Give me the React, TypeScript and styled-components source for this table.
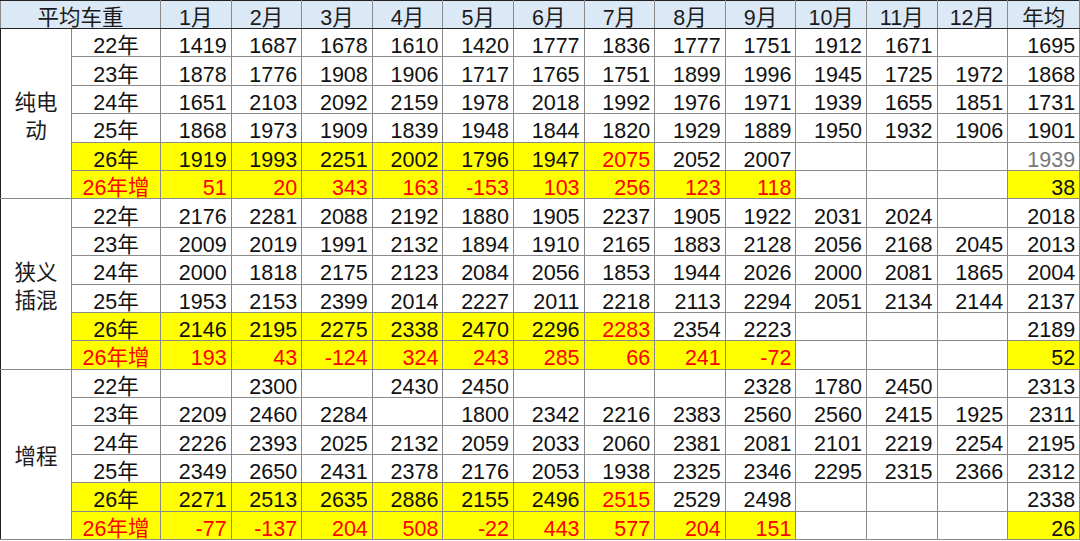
import React from "react";
import styled, { createGlobalStyle } from "styled-components";

const GlobalStyle = createGlobalStyle`
  html, body {
    margin: 0;
    padding: 0;
    background: #ffffff;
  }
  body {
    font-family: "Liberation Sans", "Noto Sans CJK SC", sans-serif;
  }
`;

type Tone = "plain" | "hi" | "hiRed" | "gray";

interface RowData {
  year: string;
  values: string[];
  avg: string;
  kind: "normal" | "current" | "growth";
}

interface Group {
  label: string[];
  rows: RowData[];
}

const MONTHS = ["1月", "2月", "3月", "4月", "5月", "6月", "7月", "8月", "9月", "10月", "11月", "12月"];

const groups: Group[] = [
  {
    label: ["纯电", "动"],
    rows: [
      { year: "22年", kind: "normal", avg: "1695", values: ["1419", "1687", "1678", "1610", "1420", "1777", "1836", "1777", "1751", "1912", "1671", ""] },
      { year: "23年", kind: "normal", avg: "1868", values: ["1878", "1776", "1908", "1906", "1717", "1765", "1751", "1899", "1996", "1945", "1725", "1972"] },
      { year: "24年", kind: "normal", avg: "1731", values: ["1651", "2103", "2092", "2159", "1978", "2018", "1992", "1976", "1971", "1939", "1655", "1851"] },
      { year: "25年", kind: "normal", avg: "1901", values: ["1868", "1973", "1909", "1839", "1948", "1844", "1820", "1929", "1889", "1950", "1932", "1906"] },
      { year: "26年", kind: "current", avg: "1939", values: ["1919", "1993", "2251", "2002", "1796", "1947", "2075", "2052", "2007", "", "", ""] },
      { year: "26年增", kind: "growth", avg: "38", values: ["51", "20", "343", "163", "-153", "103", "256", "123", "118", "", "", ""] },
    ],
  },
  {
    label: ["狭义", "插混"],
    rows: [
      { year: "22年", kind: "normal", avg: "2018", values: ["2176", "2281", "2088", "2192", "1880", "1905", "2237", "1905", "1922", "2031", "2024", ""] },
      { year: "23年", kind: "normal", avg: "2013", values: ["2009", "2019", "1991", "2132", "1894", "1910", "2165", "1883", "2128", "2056", "2168", "2045"] },
      { year: "24年", kind: "normal", avg: "2004", values: ["2000", "1818", "2175", "2123", "2084", "2056", "1853", "1944", "2026", "2000", "2081", "1865"] },
      { year: "25年", kind: "normal", avg: "2137", values: ["1953", "2153", "2399", "2014", "2227", "2011", "2218", "2113", "2294", "2051", "2134", "2144"] },
      { year: "26年", kind: "current", avg: "2189", values: ["2146", "2195", "2275", "2338", "2470", "2296", "2283", "2354", "2223", "", "", ""] },
      { year: "26年增", kind: "growth", avg: "52", values: ["193", "43", "-124", "324", "243", "285", "66", "241", "-72", "", "", ""] },
    ],
  },
  {
    label: ["增程"],
    rows: [
      { year: "22年", kind: "normal", avg: "2313", values: ["", "2300", "", "2430", "2450", "", "", "", "2328", "1780", "2450", ""] },
      { year: "23年", kind: "normal", avg: "2311", values: ["2209", "2460", "2284", "", "1800", "2342", "2216", "2383", "2560", "2560", "2415", "1925"] },
      { year: "24年", kind: "normal", avg: "2195", values: ["2226", "2393", "2025", "2132", "2059", "2033", "2060", "2381", "2081", "2101", "2219", "2254"] },
      { year: "25年", kind: "normal", avg: "2312", values: ["2349", "2650", "2431", "2378", "2176", "2053", "1938", "2325", "2346", "2295", "2315", "2366"] },
      { year: "26年", kind: "current", avg: "2338", values: ["2271", "2513", "2635", "2886", "2155", "2496", "2515", "2529", "2498", "", "", ""] },
      { year: "26年增", kind: "growth", avg: "26", values: ["-77", "-137", "204", "508", "-22", "443", "577", "204", "151", "", "", ""] },
    ],
  },
];

const Page = styled.div`
  width: 1080px;
  height: 541px;
  overflow: hidden;
`;

const Table = styled.table`
  width: 1080px;
  border-collapse: collapse;
  table-layout: fixed;
  border: 1px solid #222;
  font-size: 21.5px;
  line-height: 18px;
  color: #111;
`;

const HeadCell = styled.th`
  height: 21px;
  padding: 6px 0 0 0;
  background: #dbe8f5;
  border: 1px solid #8a8a8a;
  border-top-color: #222;
  border-bottom-color: #222;
  font-weight: normal;
  text-align: center;
  color: #1b1b1b;
  vertical-align: middle;
`;

const CategoryCell = styled.td`
  padding: 6px 0 0 0;
  border: 1px solid #8a8a8a;
  border-top-color: #222;
  border-left-color: #222;
  background: #fff;
  text-align: center;
  vertical-align: middle;
  line-height: 28px;
  color: #1b1b1b;
`;

const Cell = styled.td<{ $tone: Tone; $center?: boolean; $groupStart?: boolean }>`
  height: 20.4px;
  padding: 7px ${(p) => (p.$center ? "0" : "4px")} 0 0;
  border: 1px solid #8a8a8a;
  border-top-color: ${(p) => (p.$groupStart ? "#222" : "#8a8a8a")};
  text-align: ${(p) => (p.$center ? "center" : "right")};
  vertical-align: middle;
  white-space: nowrap;
  background: ${(p) => (p.$tone === "hi" || p.$tone === "hiRed" ? "#ffff00" : "#ffffff")};
  color: ${(p) => (p.$tone === "hiRed" ? "#ff0000" : p.$tone === "gray" ? "#777777" : "#111")};
`;

const monthTone = (row: RowData, idx: number): Tone => {
  if (row.kind === "current") {
    if (idx < 6) return "hi";
    if (idx === 6) return "hiRed";
    return "plain";
  }
  if (row.kind === "growth") {
    return idx < 9 ? "hiRed" : "plain";
  }
  return "plain";
};

const avgTone = (row: RowData, groupIdx: number): Tone => {
  if (row.kind === "growth") return "hi";
  if (row.kind === "current" && groupIdx === 0) return "gray";
  return "plain";
};

const yearTone = (row: RowData): Tone => {
  if (row.kind === "current") return "hi";
  if (row.kind === "growth") return "hiRed";
  return "plain";
};

export default function App() {
  return (
    <Page>
      <GlobalStyle />
      <Table>
        <colgroup>
          <col style={{ width: 71 }} />
          <col style={{ width: 89 }} />
          {MONTHS.map((m) => (
            <col key={m} style={{ width: 70.6 }} />
          ))}
          <col style={{ width: 72 }} />
        </colgroup>
        <thead>
          <tr>
            <HeadCell colSpan={2}>平均车重</HeadCell>
            {MONTHS.map((m) => (
              <HeadCell key={m}>{m}</HeadCell>
            ))}
            <HeadCell>年均</HeadCell>
          </tr>
        </thead>
        <tbody>
          {groups.map((g, gi) =>
            g.rows.map((row, ri) => (
              <tr key={`${gi}-${ri}`}>
                {ri === 0 && (
                  <CategoryCell rowSpan={g.rows.length}>
                    {g.label.map((l) => (
                      <div key={l}>{l}</div>
                    ))}
                  </CategoryCell>
                )}
                <Cell $tone={yearTone(row)} $center $groupStart={ri === 0}>
                  {row.year}
                </Cell>
                {row.values.map((v, vi) => (
                  <Cell key={vi} $tone={monthTone(row, vi)} $groupStart={ri === 0}>
                    {v}
                  </Cell>
                ))}
                <Cell $tone={avgTone(row, gi)} $groupStart={ri === 0}>
                  {row.avg}
                </Cell>
              </tr>
            ))
          )}
        </tbody>
      </Table>
    </Page>
  );
}
